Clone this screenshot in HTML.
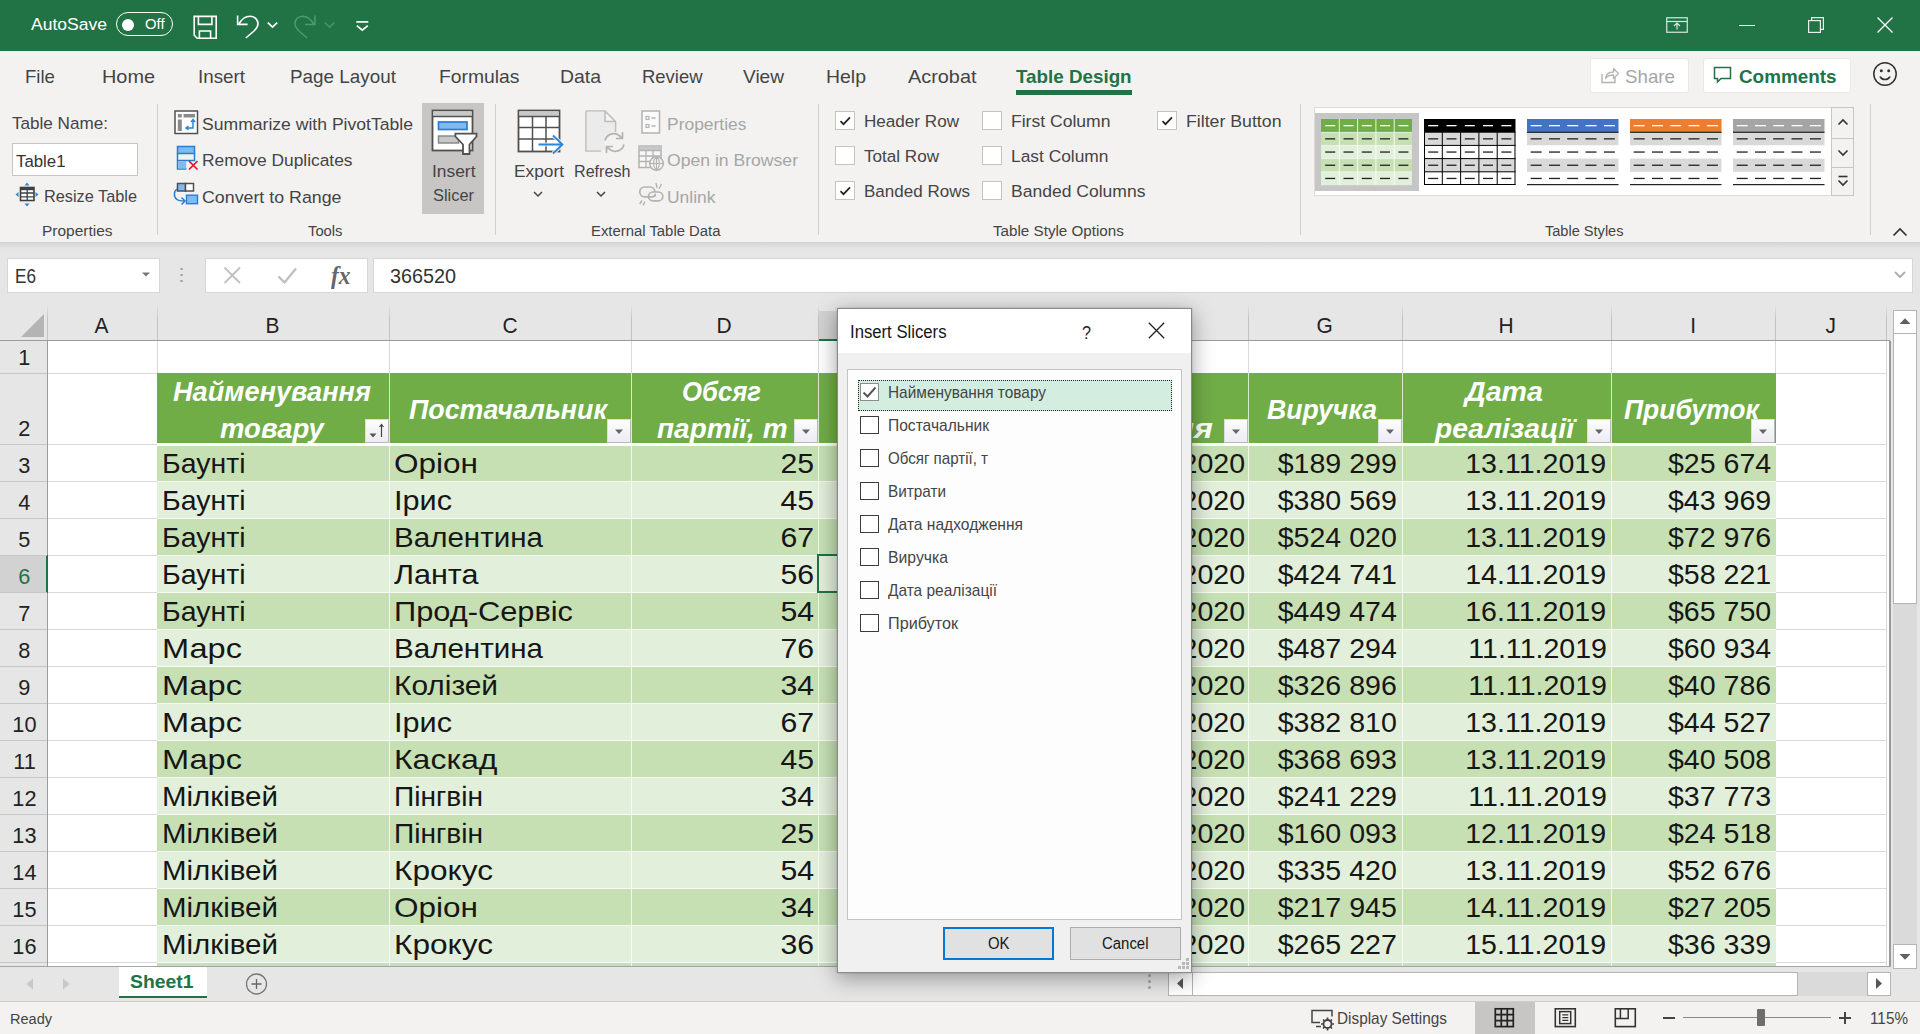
<!DOCTYPE html>
<html><head><meta charset="utf-8"><title>Excel</title>
<style>
html,body{margin:0;padding:0;overflow:hidden;}
body{width:1920px;height:1034px;overflow:hidden;position:relative;background:#e6e6e6;
font-family:"Liberation Sans",sans-serif;}
div,svg,span{position:absolute;box-sizing:border-box;}
span{white-space:pre;line-height:1;display:block;}
</style></head>
<body>
<div style="left:0px;top:0px;width:1920px;height:50.8px;background:#217346;"></div>
<div style="left:116px;top:12px;width:57px;height:24px;border:1.3px solid #fff;border-radius:12px;"></div>
<div style="left:122px;top:18.5px;width:12px;height:12px;background:#fff;border-radius:6px;"></div>
<svg style="left:192px;top:13px;" width="26" height="27" viewBox="0 0 26 27"><path d="M2.200 3.400h22v21.800h-19l-3-3z M6.400 3.400v8h13.500v-8 M7.400 25.200v-7.200h11.200v7.200" fill="none" stroke="#fff" stroke-width="1.600" stroke-linejoin="miter"/></svg>
<svg style="left:236px;top:13px;" width="26" height="27" viewBox="0 0 26 27"><path d="M1.600 2.600v8.800h10 M2.800 11 C6 5.500 10 3.200 14 3.200 C19 3.200 22 7 22 10.750 C22 14 20 16 18 18 L9.800 25" fill="none" stroke="#fff" stroke-width="1.600" stroke-linejoin="miter"/></svg>
<svg style="left:266px;top:20px;" width="13" height="10" viewBox="0 0 13 10"><path d="M1.800 2.600l4.700 4.500 4.700-4.500" fill="none" stroke="#fff" stroke-width="1.700"/></svg>
<svg style="left:292px;top:13px;" width="26" height="27" viewBox="0 0 26 27"><path d="M23 2.600v8.800h-10 M21.800 11 C18.500 5.500 14.500 3.200 10.500 3.200 C5.500 3.200 3 7 3 10.750 C3 14 5 16 7 18 L15 25" fill="none" stroke="#4c9b6e" stroke-width="1.500" stroke-linejoin="miter"/></svg>
<svg style="left:323px;top:20px;" width="13" height="10" viewBox="0 0 13 10"><path d="M1.800 2.600l4.700 4.500 4.700-4.500" fill="none" stroke="#439364" stroke-width="1.500"/></svg>
<svg style="left:355px;top:19px;" width="15" height="13" viewBox="0 0 15 13"><path d="M1.300 2.900h12" stroke="#fff" stroke-width="1.700"/><path d="M1.800 6.600l5.500 4.600 5.500-4.600" fill="none" stroke="#fff" stroke-width="1.700"/></svg>
<svg style="left:1666px;top:17px;" width="22" height="16" viewBox="0 0 22 16"><rect x="0.75" y="0.75" width="20.5" height="14.5" fill="none" stroke="#d7e8de" stroke-width="1.2"/><path d="M0.75 4.5h20.5" stroke="#d7e8de" stroke-width="1.2"/><path d="M11 12.5v-6 M8 9l3-3 3 3" fill="none" stroke="#d7e8de" stroke-width="1.2"/></svg>
<div style="left:1739px;top:24.5px;width:16px;height:1.3px;background:#e6f0ea;"></div>
<svg style="left:1808px;top:17px;" width="16" height="16" viewBox="0 0 16 16"><rect x="0.6" y="3.6" width="11.8" height="11.8" fill="none" stroke="#e6f0ea" stroke-width="1.2"/><path d="M3.6 3.6v-3h11.8v11.8h-3" fill="none" stroke="#e6f0ea" stroke-width="1.2"/></svg>
<svg style="left:1877px;top:17px;" width="16" height="16" viewBox="0 0 16 16"><path d="M0.5 0.5l15 15M15.500 0.5l-15 15" stroke="#fff" stroke-width="1.3"/></svg>
<div style="left:0px;top:50.8px;width:1920px;height:191.2px;background:#f3f2f1;"></div>
<div style="left:0px;top:242px;width:1920px;height:7px;background:linear-gradient(#d2d2d2,#e6e6e6);"></div>
<div style="left:1016px;top:90px;width:116px;height:5px;background:#217346;"></div>
<div style="left:1590px;top:58px;width:99px;height:35px;background:#fff;border:1px solid #ebe9e7;border-radius:3px;"></div>
<svg style="left:1600px;top:66px;" width="20" height="18" viewBox="0 0 20 18"><path d="M2 8v8.500h13v-5" fill="none" stroke="#b5b3b1" stroke-width="1.4"/><path d="M5.500 12.500c0.500-4.500 4-6.500 8-6.500v-3.500l5 5-5 5v-3.500c-3.500 0-6 0.500-8 3.500z" fill="none" stroke="#b5b3b1" stroke-width="1.3" stroke-linejoin="round"/></svg>
<div style="left:1702.5px;top:58px;width:148px;height:35px;background:#fff;border:1px solid #ebe9e7;border-radius:3px;"></div>
<svg style="left:1713px;top:66px;" width="20" height="18" viewBox="0 0 20 18"><path d="M1.5 1.5h16v11h-9.500l-3.500 3.500v-3.500h-3z" fill="none" stroke="#217346" stroke-width="1.5" stroke-linejoin="miter"/></svg>
<svg style="left:1871px;top:60px;" width="28" height="28" viewBox="0 0 28 28"><circle cx="14" cy="14" r="11.200" fill="none" stroke="#333" stroke-width="1.500"/><circle cx="10.300" cy="10.800" r="1.500" fill="#333"/><circle cx="17.700" cy="10.800" r="1.500" fill="#333"/><path d="M9.300 17c2 3.300 7.400 3.300 9.400 0" fill="none" stroke="#333" stroke-width="1.500" stroke-linecap="round"/></svg>
<div style="left:157px;top:104px;width:1px;height:131px;background:#d2d0ce;"></div>
<div style="left:495px;top:104px;width:1px;height:131px;background:#d2d0ce;"></div>
<div style="left:818px;top:104px;width:1px;height:131px;background:#d2d0ce;"></div>
<div style="left:1300px;top:104px;width:1px;height:131px;background:#d2d0ce;"></div>
<div style="left:1870px;top:104px;width:1px;height:131px;background:#d2d0ce;"></div>
<div style="left:12px;top:143px;width:126px;height:33px;background:#fff;border:1px solid #c8c6c4;"></div>
<svg style="left:15px;top:182px;" width="25" height="25" viewBox="0 0 25 25"><path d="M12 0.500l2.500 3h-5z M12 24.500l2.500-3h-5z M0.500 12.500l3-2.500v5z M23.500 12.500l-3-2.500v5z" fill="#2b88d8"/><rect x="5.500" y="5.500" width="13.500" height="13" fill="#fff" stroke="#404040" stroke-width="1.600"/><path d="M5.500 7h13.500" stroke="#404040" stroke-width="2.400"/><path d="M5.500 11h13.500 M5.500 14.800h13.500 M12.200 8v10.500" stroke="#404040" stroke-width="1.300"/></svg>
<svg style="left:174px;top:110px;" width="25" height="25" viewBox="0 0 25 25"><rect x="1" y="1" width="22.500" height="22.500" fill="#fff" stroke="#505050" stroke-width="1.500"/><rect x="3.800" y="4" width="4" height="3.500" fill="#8a8a8a"/><rect x="9.500" y="4" width="11.500" height="3.500" fill="#8a8a8a"/><rect x="3.800" y="9.500" width="4" height="11.500" fill="#8a8a8a"/><path d="M19 10v8h-6.500 M17 12l2-2.500 2 2.500 M14.500 16l-2.500 2 2.500 2" fill="none" stroke="#2b88d8" stroke-width="1.500"/></svg>
<svg style="left:176px;top:145px;" width="24" height="26" viewBox="0 0 24 26"><rect x="1.500" y="1.500" width="17" height="7" fill="#7fbaf0" stroke="#2b7cd3" stroke-width="1.500"/><path d="M1.500 8.500v15.500h9 M1.500 15.500h17v-7" fill="none" stroke="#2b7cd3" stroke-width="1.500"/><rect x="2.200" y="16.200" width="8" height="7.300" fill="#7fbaf0"/><path d="M13 16l8.500 8.500 M21.500 16l-8.500 8.500" stroke="#e81123" stroke-width="1.700"/></svg>
<svg style="left:173px;top:181px;" width="26" height="26" viewBox="0 0 26 26"><rect x="4.500" y="2.500" width="8" height="7.500" fill="#7fbaf0" stroke="#505050" stroke-width="1.500"/><rect x="12.500" y="2.500" width="8" height="7.500" fill="#fff" stroke="#505050" stroke-width="1.500"/><rect x="13.500" y="14.200" width="11" height="8.500" fill="#7fbaf0" stroke="#2b7cd3" stroke-width="1.400"/><path d="M4 8c-3.500 2.500-3.500 8 0 10.500 2 1.400 4.500 1.500 7.500 1.500 M8.500 16.500l3.500 3.500-3.500 3.500" fill="none" stroke="#2b7cd3" stroke-width="1.500"/></svg>
<div style="left:422px;top:103px;width:62px;height:111px;background:#c8c6c4;"></div>
<svg style="left:431px;top:109px;" width="47" height="47" viewBox="0 0 47 47"><rect x="1.500" y="1.500" width="40" height="40" fill="#fff" stroke="#505050" stroke-width="1.800"/><rect x="2.400" y="2.400" width="38.200" height="4.500" fill="#c8c8c8"/><path d="M1.500 7.500h40" stroke="#505050" stroke-width="1.500"/><rect x="7.500" y="13" width="28.500" height="7.500" fill="#7fbaf0" stroke="#2b7cd3" stroke-width="1.700"/><rect x="7.500" y="27" width="20" height="7" fill="#c8c8c8" stroke="#8a8a8a" stroke-width="1.500"/><path d="M24.400 24.600H45.500V27.500L38.500 35.500V45H32V35.500L24.400 27.500Z" fill="#fff" stroke="#505050" stroke-width="1.800" stroke-linejoin="miter"/></svg>
<svg style="left:517px;top:109px;" width="48" height="47" viewBox="0 0 48 47"><rect x="1.500" y="1.500" width="41" height="41" fill="#fff" stroke="#505050" stroke-width="1.800"/><rect x="2.400" y="2.400" width="39.200" height="4.500" fill="#c8c8c8"/><path d="M1.500 7.500h41 M1.500 18.500h41 M1.500 30h41 M15.500 7.500v35 M29 7.500v35" stroke="#505050" stroke-width="1.500"/><path d="M21.500 35.500h24 M36 26.500l9.500 9-9.500 9" fill="none" stroke="#f8f8f8" stroke-width="4" opacity="0.8"/><path d="M21.500 35.500h24 M36 26.500l9.500 9-9.500 9" fill="none" stroke="#2b88d8" stroke-width="1.800"/></svg>
<svg style="left:532px;top:189.5px;" width="12" height="9" viewBox="0 0 12 9"><path d="M2 2l4 4 4-4" fill="none" stroke="#444" stroke-width="1.500"/></svg>
<svg style="left:584px;top:109px;" width="46" height="47" viewBox="0 0 46 47"><path d="M2 2h19l10.500 10.500v12 M2 2v40h15" fill="none" stroke="#bdbdbd" stroke-width="1.600"/><path d="M2.800 2.800h17.800v10.200h10v28.200h-27.800z" fill="#ebebeb" stroke="none"/><path d="M21 2v10.500h10.500" fill="none" stroke="#bdbdbd" stroke-width="1.600"/><circle cx="30.500" cy="33.500" r="10.500" fill="#f3f2f1" stroke="none"/><path d="M21 31.500c1.500-6 8-8.500 13.500-5.500l3.500 3 M38.500 23v6.500h-6.500 M40 35.500c-1.500 6-8 8.500-13.500 5.500l-3.500-3 M22.500 44v-6.500h6.500" fill="none" stroke="#b3b3b3" stroke-width="1.700"/></svg>
<svg style="left:595px;top:190px;" width="12" height="9" viewBox="0 0 12 9"><path d="M2 2l4 4 4-4" fill="none" stroke="#444" stroke-width="1.500"/></svg>
<svg style="left:641px;top:110px;" width="20" height="25" viewBox="0 0 20 25"><rect x="1" y="1" width="17.500" height="22" fill="#fafafa" stroke="#b3b3b3" stroke-width="1.500"/><rect x="5" y="6.500" width="3" height="3" fill="none" stroke="#b3b3b3" stroke-width="1.200"/><rect x="5" y="14.500" width="3" height="3" fill="none" stroke="#b3b3b3" stroke-width="1.200"/><path d="M10.500 8h4 M10.500 16h4" stroke="#b3b3b3" stroke-width="1.400"/></svg>
<svg style="left:638px;top:145px;" width="27" height="27" viewBox="0 0 27 27"><rect x="1" y="1" width="22" height="21.500" fill="#f7f7f7" stroke="#b3b3b3" stroke-width="1.500"/><rect x="1.700" y="1.700" width="20.600" height="3.300" fill="#c8c8c8"/><path d="M1 5.500h22 M1 11h22 M1 16.500h12 M8 5.500v17 M15 5.500v8" stroke="#b3b3b3" stroke-width="1.300"/><circle cx="18.500" cy="18.500" r="6.800" fill="#f3f2f1" stroke="#b3b3b3" stroke-width="1.500"/><path d="M11.700 18.500h13.600 M18.500 11.700v13.600 M18.500 11.700c-4 4-4 9.500 0 13.600 M18.500 11.700c4 4 4 9.500 0 13.600" fill="none" stroke="#b3b3b3" stroke-width="1.100"/></svg>
<svg style="left:638px;top:181px;" width="27" height="27" viewBox="0 0 27 27"><rect x="1.800" y="6" width="15" height="9.800" rx="4.900" fill="none" stroke="#b3b3b3" stroke-width="1.700"/><rect x="10.500" y="11" width="14.300" height="8.800" rx="4.400" fill="#f3f2f1" stroke="#b3b3b3" stroke-width="1.700"/><path d="M10.500 15.800h4c2 0 2.800-1.500 2.800-3" fill="none" stroke="#b3b3b3" stroke-width="1.700"/><path d="M18 2l1 5 M23.500 3l-2.500 5 M7 20.500l-2 4 M4 19.500l-2.300 3.500" stroke="#b3b3b3" stroke-width="1.400"/></svg>
<div style="left:835px;top:110.5px;width:19.5px;height:19.5px;background:#fff;border:1.800px solid #c6c4c2;"></div>
<svg style="left:835px;top:110.5px;" width="20" height="20" viewBox="0 0 20 20"><path d="M5.500 10.200l3 3 6.500-6.800" fill="none" stroke="#222" stroke-width="1.700"/></svg>
<div style="left:835px;top:145.5px;width:19.5px;height:19.5px;background:#fff;border:1.800px solid #c6c4c2;"></div>
<div style="left:835px;top:180.5px;width:19.5px;height:19.5px;background:#fff;border:1.800px solid #c6c4c2;"></div>
<svg style="left:835px;top:180.5px;" width="20" height="20" viewBox="0 0 20 20"><path d="M5.500 10.200l3 3 6.500-6.800" fill="none" stroke="#222" stroke-width="1.700"/></svg>
<div style="left:982px;top:110.5px;width:19.5px;height:19.5px;background:#fff;border:1.800px solid #c6c4c2;"></div>
<div style="left:982px;top:145.5px;width:19.5px;height:19.5px;background:#fff;border:1.800px solid #c6c4c2;"></div>
<div style="left:982px;top:180.5px;width:19.5px;height:19.5px;background:#fff;border:1.800px solid #c6c4c2;"></div>
<div style="left:1157px;top:110.5px;width:19.5px;height:19.5px;background:#fff;border:1.800px solid #c6c4c2;"></div>
<svg style="left:1157px;top:110.5px;" width="20" height="20" viewBox="0 0 20 20"><path d="M5.500 10.200l3 3 6.500-6.800" fill="none" stroke="#222" stroke-width="1.700"/></svg>
<div style="left:1314px;top:107px;width:540px;height:89px;background:#fff;border:1px solid #dddbd9;"></div>
<div style="left:1831px;top:107px;width:23px;height:89px;background:#f3f2f1;border:1px solid #c8c6c4;"></div>
<div style="left:1831px;top:137.5px;width:23px;height:1px;background:#c8c6c4;"></div>
<div style="left:1831px;top:166.5px;width:23px;height:1px;background:#c8c6c4;"></div>
<svg style="left:1836px;top:117px;" width="14" height="10" viewBox="0 0 14 10"><path d="M2.500 7.500l4.500-4.500 4.500 4.500" fill="none" stroke="#333" stroke-width="1.600"/></svg>
<svg style="left:1836px;top:148px;" width="14" height="10" viewBox="0 0 14 10"><path d="M2.500 2.500l4.500 4.500 4.500-4.500" fill="none" stroke="#333" stroke-width="1.600"/></svg>
<svg style="left:1836px;top:174px;" width="14" height="14" viewBox="0 0 14 14"><path d="M2.500 2.500h9" stroke="#333" stroke-width="1.600"/><path d="M2.500 6.500l4.500 4.500 4.500-4.500" fill="none" stroke="#333" stroke-width="1.600"/></svg>
<div style="left:1314.5px;top:113px;width:104px;height:78px;background:#c6c6c6;"></div>
<svg style="left:1320.5px;top:119px;" width="91.5" height="66.5" viewBox="0 0 91.5 66.5"><rect x="0" y="0.0" width="91.5" height="13.4" fill="#70ad47"/><rect x="0" y="13.2" width="91.5" height="13.4" fill="#c6e0b4"/><rect x="0" y="26.4" width="91.5" height="13.4" fill="#e2efda"/><rect x="0" y="39.6" width="91.5" height="13.4" fill="#c6e0b4"/><rect x="0" y="52.8" width="91.5" height="13.4" fill="#e2efda"/><rect x="17.8" y="0" width="1" height="66.0" fill="#fff" opacity="0.85"/><rect x="36.1" y="0" width="1" height="66.0" fill="#fff" opacity="0.85"/><rect x="54.4" y="0" width="1" height="66.0" fill="#fff" opacity="0.85"/><rect x="72.7" y="0" width="1" height="66.0" fill="#fff" opacity="0.85"/><rect x="0" y="12.9" width="91.5" height="0.800" fill="#fff" opacity="0.7"/><rect x="0" y="26.1" width="91.5" height="0.800" fill="#fff" opacity="0.7"/><rect x="0" y="39.3" width="91.5" height="0.800" fill="#fff" opacity="0.7"/><rect x="0" y="52.5" width="91.5" height="0.800" fill="#fff" opacity="0.7"/><rect x="4.2" y="6.0" width="10" height="1.300" fill="#fff"/><rect x="22.5" y="6.0" width="10" height="1.300" fill="#fff"/><rect x="40.8" y="6.0" width="10" height="1.300" fill="#fff"/><rect x="59.0" y="6.0" width="10" height="1.300" fill="#fff"/><rect x="77.4" y="6.0" width="10" height="1.300" fill="#fff"/><rect x="4.2" y="19.2" width="10" height="1.300" fill="#222"/><rect x="22.5" y="19.2" width="10" height="1.300" fill="#222"/><rect x="40.8" y="19.2" width="10" height="1.300" fill="#222"/><rect x="59.0" y="19.2" width="10" height="1.300" fill="#222"/><rect x="77.4" y="19.2" width="10" height="1.300" fill="#222"/><rect x="4.2" y="32.4" width="10" height="1.300" fill="#222"/><rect x="22.5" y="32.4" width="10" height="1.300" fill="#222"/><rect x="40.8" y="32.4" width="10" height="1.300" fill="#222"/><rect x="59.0" y="32.4" width="10" height="1.300" fill="#222"/><rect x="77.4" y="32.4" width="10" height="1.300" fill="#222"/><rect x="4.2" y="45.6" width="10" height="1.300" fill="#222"/><rect x="22.5" y="45.6" width="10" height="1.300" fill="#222"/><rect x="40.8" y="45.6" width="10" height="1.300" fill="#222"/><rect x="59.0" y="45.6" width="10" height="1.300" fill="#222"/><rect x="77.4" y="45.6" width="10" height="1.300" fill="#222"/><rect x="4.2" y="58.8" width="10" height="1.300" fill="#222"/><rect x="22.5" y="58.8" width="10" height="1.300" fill="#222"/><rect x="40.8" y="58.8" width="10" height="1.300" fill="#222"/><rect x="59.0" y="58.8" width="10" height="1.300" fill="#222"/><rect x="77.4" y="58.8" width="10" height="1.300" fill="#222"/></svg>
<svg style="left:1424px;top:119px;" width="91.5" height="66.5" viewBox="0 0 91.5 66.5"><rect x="0" y="0.0" width="91.5" height="13.4" fill="#000"/><rect x="0" y="13.2" width="91.5" height="13.4" fill="#d9d9d9"/><rect x="0" y="26.4" width="91.5" height="13.4" fill="#fff"/><rect x="0" y="39.6" width="91.5" height="13.4" fill="#d9d9d9"/><rect x="0" y="52.8" width="91.5" height="13.4" fill="#fff"/><rect x="0.0" y="13.2" width="1" height="52.8" fill="#000"/><rect x="17.8" y="13.2" width="1" height="52.8" fill="#000"/><rect x="36.1" y="13.2" width="1" height="52.8" fill="#000"/><rect x="54.4" y="13.2" width="1" height="52.8" fill="#000"/><rect x="72.7" y="13.2" width="1" height="52.8" fill="#000"/><rect x="90.5" y="13.2" width="1" height="52.8" fill="#000"/><rect x="0" y="12.7" width="91.5" height="1" fill="#000"/><rect x="0" y="25.9" width="91.5" height="1" fill="#000"/><rect x="0" y="39.1" width="91.5" height="1" fill="#000"/><rect x="0" y="52.3" width="91.5" height="1" fill="#000"/><rect x="0" y="65.0" width="91.5" height="1" fill="#000"/><rect x="4.2" y="6.0" width="10" height="1.300" fill="#fff"/><rect x="22.5" y="6.0" width="10" height="1.300" fill="#fff"/><rect x="40.8" y="6.0" width="10" height="1.300" fill="#fff"/><rect x="59.0" y="6.0" width="10" height="1.300" fill="#fff"/><rect x="77.4" y="6.0" width="10" height="1.300" fill="#fff"/><rect x="4.2" y="19.2" width="10" height="1.300" fill="#222"/><rect x="22.5" y="19.2" width="10" height="1.300" fill="#222"/><rect x="40.8" y="19.2" width="10" height="1.300" fill="#222"/><rect x="59.0" y="19.2" width="10" height="1.300" fill="#222"/><rect x="77.4" y="19.2" width="10" height="1.300" fill="#222"/><rect x="4.2" y="32.4" width="10" height="1.300" fill="#222"/><rect x="22.5" y="32.4" width="10" height="1.300" fill="#222"/><rect x="40.8" y="32.4" width="10" height="1.300" fill="#222"/><rect x="59.0" y="32.4" width="10" height="1.300" fill="#222"/><rect x="77.4" y="32.4" width="10" height="1.300" fill="#222"/><rect x="4.2" y="45.6" width="10" height="1.300" fill="#222"/><rect x="22.5" y="45.6" width="10" height="1.300" fill="#222"/><rect x="40.8" y="45.6" width="10" height="1.300" fill="#222"/><rect x="59.0" y="45.6" width="10" height="1.300" fill="#222"/><rect x="77.4" y="45.6" width="10" height="1.300" fill="#222"/><rect x="4.2" y="58.8" width="10" height="1.300" fill="#222"/><rect x="22.5" y="58.8" width="10" height="1.300" fill="#222"/><rect x="40.8" y="58.8" width="10" height="1.300" fill="#222"/><rect x="59.0" y="58.8" width="10" height="1.300" fill="#222"/><rect x="77.4" y="58.8" width="10" height="1.300" fill="#222"/></svg>
<svg style="left:1527px;top:119px;" width="91.5" height="66.5" viewBox="0 0 91.5 66.5"><rect x="0" y="0.0" width="91.5" height="13.4" fill="#4472c4"/><rect x="0" y="13.2" width="91.5" height="13.4" fill="#d9d9d9"/><rect x="0" y="26.4" width="91.5" height="13.4" fill="#fff"/><rect x="0" y="39.6" width="91.5" height="13.4" fill="#d9d9d9"/><rect x="0" y="52.8" width="91.5" height="13.4" fill="#fff"/><rect x="0" y="12.7" width="91.5" height="1.200" fill="#222"/><rect x="0" y="65.0" width="91.5" height="1.200" fill="#222"/><rect x="3.7" y="6.0" width="11" height="1.300" fill="#fff"/><rect x="22.0" y="6.0" width="11" height="1.300" fill="#fff"/><rect x="40.2" y="6.0" width="11" height="1.300" fill="#fff"/><rect x="58.5" y="6.0" width="11" height="1.300" fill="#fff"/><rect x="76.9" y="6.0" width="11" height="1.300" fill="#fff"/><rect x="3.7" y="19.2" width="11" height="1.300" fill="#222"/><rect x="22.0" y="19.2" width="11" height="1.300" fill="#222"/><rect x="40.2" y="19.2" width="11" height="1.300" fill="#222"/><rect x="58.5" y="19.2" width="11" height="1.300" fill="#222"/><rect x="76.9" y="19.2" width="11" height="1.300" fill="#222"/><rect x="3.7" y="32.4" width="11" height="1.300" fill="#222"/><rect x="22.0" y="32.4" width="11" height="1.300" fill="#222"/><rect x="40.2" y="32.4" width="11" height="1.300" fill="#222"/><rect x="58.5" y="32.4" width="11" height="1.300" fill="#222"/><rect x="76.9" y="32.4" width="11" height="1.300" fill="#222"/><rect x="3.7" y="45.6" width="11" height="1.300" fill="#222"/><rect x="22.0" y="45.6" width="11" height="1.300" fill="#222"/><rect x="40.2" y="45.6" width="11" height="1.300" fill="#222"/><rect x="58.5" y="45.6" width="11" height="1.300" fill="#222"/><rect x="76.9" y="45.6" width="11" height="1.300" fill="#222"/><rect x="3.7" y="58.8" width="11" height="1.300" fill="#222"/><rect x="22.0" y="58.8" width="11" height="1.300" fill="#222"/><rect x="40.2" y="58.8" width="11" height="1.300" fill="#222"/><rect x="58.5" y="58.8" width="11" height="1.300" fill="#222"/><rect x="76.9" y="58.8" width="11" height="1.300" fill="#222"/></svg>
<svg style="left:1630px;top:119px;" width="91.5" height="66.5" viewBox="0 0 91.5 66.5"><rect x="0" y="0.0" width="91.5" height="13.4" fill="#ed7d31"/><rect x="0" y="13.2" width="91.5" height="13.4" fill="#d9d9d9"/><rect x="0" y="26.4" width="91.5" height="13.4" fill="#fff"/><rect x="0" y="39.6" width="91.5" height="13.4" fill="#d9d9d9"/><rect x="0" y="52.8" width="91.5" height="13.4" fill="#fff"/><rect x="0" y="12.7" width="91.5" height="1.200" fill="#222"/><rect x="0" y="65.0" width="91.5" height="1.200" fill="#222"/><rect x="3.7" y="6.0" width="11" height="1.300" fill="#fff"/><rect x="22.0" y="6.0" width="11" height="1.300" fill="#fff"/><rect x="40.2" y="6.0" width="11" height="1.300" fill="#fff"/><rect x="58.5" y="6.0" width="11" height="1.300" fill="#fff"/><rect x="76.9" y="6.0" width="11" height="1.300" fill="#fff"/><rect x="3.7" y="19.2" width="11" height="1.300" fill="#222"/><rect x="22.0" y="19.2" width="11" height="1.300" fill="#222"/><rect x="40.2" y="19.2" width="11" height="1.300" fill="#222"/><rect x="58.5" y="19.2" width="11" height="1.300" fill="#222"/><rect x="76.9" y="19.2" width="11" height="1.300" fill="#222"/><rect x="3.7" y="32.4" width="11" height="1.300" fill="#222"/><rect x="22.0" y="32.4" width="11" height="1.300" fill="#222"/><rect x="40.2" y="32.4" width="11" height="1.300" fill="#222"/><rect x="58.5" y="32.4" width="11" height="1.300" fill="#222"/><rect x="76.9" y="32.4" width="11" height="1.300" fill="#222"/><rect x="3.7" y="45.6" width="11" height="1.300" fill="#222"/><rect x="22.0" y="45.6" width="11" height="1.300" fill="#222"/><rect x="40.2" y="45.6" width="11" height="1.300" fill="#222"/><rect x="58.5" y="45.6" width="11" height="1.300" fill="#222"/><rect x="76.9" y="45.6" width="11" height="1.300" fill="#222"/><rect x="3.7" y="58.8" width="11" height="1.300" fill="#222"/><rect x="22.0" y="58.8" width="11" height="1.300" fill="#222"/><rect x="40.2" y="58.8" width="11" height="1.300" fill="#222"/><rect x="58.5" y="58.8" width="11" height="1.300" fill="#222"/><rect x="76.9" y="58.8" width="11" height="1.300" fill="#222"/></svg>
<svg style="left:1733px;top:119px;" width="91.5" height="66.5" viewBox="0 0 91.5 66.5"><rect x="0" y="0.0" width="91.5" height="13.4" fill="#a5a5a5"/><rect x="0" y="13.2" width="91.5" height="13.4" fill="#d9d9d9"/><rect x="0" y="26.4" width="91.5" height="13.4" fill="#fff"/><rect x="0" y="39.6" width="91.5" height="13.4" fill="#d9d9d9"/><rect x="0" y="52.8" width="91.5" height="13.4" fill="#fff"/><rect x="0" y="12.7" width="91.5" height="1.200" fill="#222"/><rect x="0" y="65.0" width="91.5" height="1.200" fill="#222"/><rect x="3.7" y="6.0" width="11" height="1.300" fill="#fff"/><rect x="22.0" y="6.0" width="11" height="1.300" fill="#fff"/><rect x="40.2" y="6.0" width="11" height="1.300" fill="#fff"/><rect x="58.5" y="6.0" width="11" height="1.300" fill="#fff"/><rect x="76.9" y="6.0" width="11" height="1.300" fill="#fff"/><rect x="3.7" y="19.2" width="11" height="1.300" fill="#222"/><rect x="22.0" y="19.2" width="11" height="1.300" fill="#222"/><rect x="40.2" y="19.2" width="11" height="1.300" fill="#222"/><rect x="58.5" y="19.2" width="11" height="1.300" fill="#222"/><rect x="76.9" y="19.2" width="11" height="1.300" fill="#222"/><rect x="3.7" y="32.4" width="11" height="1.300" fill="#222"/><rect x="22.0" y="32.4" width="11" height="1.300" fill="#222"/><rect x="40.2" y="32.4" width="11" height="1.300" fill="#222"/><rect x="58.5" y="32.4" width="11" height="1.300" fill="#222"/><rect x="76.9" y="32.4" width="11" height="1.300" fill="#222"/><rect x="3.7" y="45.6" width="11" height="1.300" fill="#222"/><rect x="22.0" y="45.6" width="11" height="1.300" fill="#222"/><rect x="40.2" y="45.6" width="11" height="1.300" fill="#222"/><rect x="58.5" y="45.6" width="11" height="1.300" fill="#222"/><rect x="76.9" y="45.6" width="11" height="1.300" fill="#222"/><rect x="3.7" y="58.8" width="11" height="1.300" fill="#222"/><rect x="22.0" y="58.8" width="11" height="1.300" fill="#222"/><rect x="40.2" y="58.8" width="11" height="1.300" fill="#222"/><rect x="58.5" y="58.8" width="11" height="1.300" fill="#222"/><rect x="76.9" y="58.8" width="11" height="1.300" fill="#222"/></svg>
<svg style="left:1891px;top:226px;" width="18" height="12" viewBox="0 0 18 12"><path d="M2.500 9.500l6.500-6.500 6.500 6.500" fill="none" stroke="#333" stroke-width="1.700"/></svg>
<div style="left:7px;top:258px;width:153px;height:35px;background:#fff;border:1px solid #d6d6d6;"></div>
<svg style="left:141px;top:271px;" width="10" height="7" viewBox="0 0 10 7"><path d="M1 1.500h8l-4 4z" fill="#777"/></svg>
<div style="left:180px;top:267.5px;width:2.5px;height:2.5px;background:#a6a6a6;border-radius:2px;"></div>
<div style="left:180px;top:273.5px;width:2.5px;height:2.5px;background:#a6a6a6;border-radius:2px;"></div>
<div style="left:180px;top:279.5px;width:2.5px;height:2.5px;background:#a6a6a6;border-radius:2px;"></div>
<div style="left:205px;top:258px;width:163px;height:35px;background:#fff;border:1px solid #d6d6d6;"></div>
<svg style="left:223px;top:266px;" width="19" height="19" viewBox="0 0 19 19"><path d="M1.500 1.500l15.500 15.500M17 1.500l-15.500 15.500" stroke="#c0c0c0" stroke-width="1.800"/></svg>
<svg style="left:277px;top:266px;" width="21" height="19" viewBox="0 0 21 19"><path d="M1.500 10.500l6 6 11.500-14" fill="none" stroke="#c0c0c0" stroke-width="2.400"/></svg>
<div style="left:373px;top:258px;width:1540px;height:35px;background:#fff;border:1px solid #d6d6d6;"></div>
<svg style="left:1893px;top:270px;" width="14" height="10" viewBox="0 0 14 10"><path d="M2 2l5 5 5-5" fill="none" stroke="#b0b0b0" stroke-width="2"/></svg>
<div style="left:47px;top:341px;width:1842px;height:625px;background:#fff;"></div>
<div style="left:0px;top:311px;width:1889px;height:30px;background:#e6e6e6;"></div>
<div style="left:0px;top:340px;width:1890px;height:1.3px;background:#9c9c9c;"></div>
<svg style="left:20px;top:313px;" width="25" height="25" viewBox="0 0 25 25"><path d="M24 1v23h-23z" fill="#b4b4b4"/></svg>
<div style="left:47px;top:306px;width:1px;height:34px;background:linear-gradient(#e0e0e0,#c2c2c2 40%);"></div>
<div style="left:157px;top:306px;width:1px;height:34px;background:linear-gradient(#e0e0e0,#c2c2c2 40%);"></div>
<div style="left:389px;top:306px;width:1px;height:34px;background:linear-gradient(#e0e0e0,#c2c2c2 40%);"></div>
<div style="left:631px;top:306px;width:1px;height:34px;background:linear-gradient(#e0e0e0,#c2c2c2 40%);"></div>
<div style="left:818px;top:306px;width:1px;height:34px;background:linear-gradient(#e0e0e0,#c2c2c2 40%);"></div>
<div style="left:1010px;top:306px;width:1px;height:34px;background:linear-gradient(#e0e0e0,#c2c2c2 40%);"></div>
<div style="left:1248px;top:306px;width:1px;height:34px;background:linear-gradient(#e0e0e0,#c2c2c2 40%);"></div>
<div style="left:1402px;top:306px;width:1px;height:34px;background:linear-gradient(#e0e0e0,#c2c2c2 40%);"></div>
<div style="left:1611px;top:306px;width:1px;height:34px;background:linear-gradient(#e0e0e0,#c2c2c2 40%);"></div>
<div style="left:1775px;top:306px;width:1px;height:34px;background:linear-gradient(#e0e0e0,#c2c2c2 40%);"></div>
<div style="left:1886px;top:306px;width:1px;height:34px;background:linear-gradient(#e0e0e0,#c2c2c2 40%);"></div>
<div style="left:819px;top:311px;width:191px;height:29px;background:#d2d2d2;"></div>
<div style="left:819px;top:339px;width:191px;height:2px;background:#217346;"></div>
<div style="left:0px;top:341px;width:47px;height:625px;background:#e6e6e6;"></div>
<div style="left:47px;top:341px;width:1px;height:625px;background:#9c9c9c;"></div>
<div style="left:0px;top:556px;width:46px;height:36px;background:#d2d2d2;"></div>
<div style="left:45.5px;top:555px;width:2.5px;height:38px;background:#217346;"></div>
<div style="left:0px;top:373px;width:47px;height:1px;background:#c6c6c6;"></div>
<div style="left:0px;top:444px;width:47px;height:1px;background:#c6c6c6;"></div>
<div style="left:0px;top:481px;width:47px;height:1px;background:#c6c6c6;"></div>
<div style="left:0px;top:518px;width:47px;height:1px;background:#c6c6c6;"></div>
<div style="left:0px;top:555px;width:47px;height:1px;background:#c6c6c6;"></div>
<div style="left:0px;top:592px;width:47px;height:1px;background:#c6c6c6;"></div>
<div style="left:0px;top:629px;width:47px;height:1px;background:#c6c6c6;"></div>
<div style="left:0px;top:666px;width:47px;height:1px;background:#c6c6c6;"></div>
<div style="left:0px;top:703px;width:47px;height:1px;background:#c6c6c6;"></div>
<div style="left:0px;top:740px;width:47px;height:1px;background:#c6c6c6;"></div>
<div style="left:0px;top:777px;width:47px;height:1px;background:#c6c6c6;"></div>
<div style="left:0px;top:814px;width:47px;height:1px;background:#c6c6c6;"></div>
<div style="left:0px;top:851px;width:47px;height:1px;background:#c6c6c6;"></div>
<div style="left:0px;top:888px;width:47px;height:1px;background:#c6c6c6;"></div>
<div style="left:0px;top:925px;width:47px;height:1px;background:#c6c6c6;"></div>
<div style="left:0px;top:962px;width:47px;height:1px;background:#c6c6c6;"></div>
<div style="left:48px;top:373px;width:1839px;height:1px;background:#d9d9d9;"></div>
<div style="left:48px;top:444px;width:1839px;height:1px;background:#d9d9d9;"></div>
<div style="left:48px;top:481px;width:1839px;height:1px;background:#d9d9d9;"></div>
<div style="left:48px;top:518px;width:1839px;height:1px;background:#d9d9d9;"></div>
<div style="left:48px;top:555px;width:1839px;height:1px;background:#d9d9d9;"></div>
<div style="left:48px;top:592px;width:1839px;height:1px;background:#d9d9d9;"></div>
<div style="left:48px;top:629px;width:1839px;height:1px;background:#d9d9d9;"></div>
<div style="left:48px;top:666px;width:1839px;height:1px;background:#d9d9d9;"></div>
<div style="left:48px;top:703px;width:1839px;height:1px;background:#d9d9d9;"></div>
<div style="left:48px;top:740px;width:1839px;height:1px;background:#d9d9d9;"></div>
<div style="left:48px;top:777px;width:1839px;height:1px;background:#d9d9d9;"></div>
<div style="left:48px;top:814px;width:1839px;height:1px;background:#d9d9d9;"></div>
<div style="left:48px;top:851px;width:1839px;height:1px;background:#d9d9d9;"></div>
<div style="left:48px;top:888px;width:1839px;height:1px;background:#d9d9d9;"></div>
<div style="left:48px;top:925px;width:1839px;height:1px;background:#d9d9d9;"></div>
<div style="left:48px;top:962px;width:1839px;height:1px;background:#d9d9d9;"></div>
<div style="left:48px;top:962px;width:1839px;height:1px;background:#d9d9d9;"></div>
<div style="left:157px;top:341px;width:1px;height:625px;background:#d9d9d9;"></div>
<div style="left:389px;top:341px;width:1px;height:625px;background:#d9d9d9;"></div>
<div style="left:631px;top:341px;width:1px;height:625px;background:#d9d9d9;"></div>
<div style="left:818px;top:341px;width:1px;height:625px;background:#d9d9d9;"></div>
<div style="left:1010px;top:341px;width:1px;height:625px;background:#d9d9d9;"></div>
<div style="left:1248px;top:341px;width:1px;height:625px;background:#d9d9d9;"></div>
<div style="left:1402px;top:341px;width:1px;height:625px;background:#d9d9d9;"></div>
<div style="left:1611px;top:341px;width:1px;height:625px;background:#d9d9d9;"></div>
<div style="left:1775px;top:341px;width:1px;height:625px;background:#d9d9d9;"></div>
<div style="left:1886px;top:341px;width:1px;height:625px;background:#d9d9d9;"></div>
<div style="left:1889px;top:341px;width:1.5px;height:626px;background:#9a9a9a;"></div>
<div style="left:157px;top:373px;width:1619px;height:71px;background:#70ad47;"></div>
<div style="left:157px;top:445px;width:1619px;height:37px;background:#c6e0b4;"></div>
<div style="left:157px;top:482px;width:1619px;height:37px;background:#e2efda;"></div>
<div style="left:157px;top:519px;width:1619px;height:37px;background:#c6e0b4;"></div>
<div style="left:157px;top:556px;width:1619px;height:37px;background:#e2efda;"></div>
<div style="left:157px;top:593px;width:1619px;height:37px;background:#c6e0b4;"></div>
<div style="left:157px;top:630px;width:1619px;height:37px;background:#e2efda;"></div>
<div style="left:157px;top:667px;width:1619px;height:37px;background:#c6e0b4;"></div>
<div style="left:157px;top:704px;width:1619px;height:37px;background:#e2efda;"></div>
<div style="left:157px;top:741px;width:1619px;height:37px;background:#c6e0b4;"></div>
<div style="left:157px;top:778px;width:1619px;height:37px;background:#e2efda;"></div>
<div style="left:157px;top:815px;width:1619px;height:37px;background:#c6e0b4;"></div>
<div style="left:157px;top:852px;width:1619px;height:37px;background:#e2efda;"></div>
<div style="left:157px;top:889px;width:1619px;height:37px;background:#c6e0b4;"></div>
<div style="left:157px;top:926px;width:1619px;height:37px;background:#e2efda;"></div>
<div style="left:157px;top:963px;width:1619px;height:3px;background:#c6e0b4;"></div>
<div style="left:157px;top:443px;width:1619px;height:3px;background:#fff;"></div>
<div style="left:389px;top:373px;width:1px;height:593px;background:rgba(255,255,255,0.75);"></div>
<div style="left:631px;top:373px;width:1px;height:593px;background:rgba(255,255,255,0.75);"></div>
<div style="left:818px;top:373px;width:1px;height:593px;background:rgba(255,255,255,0.75);"></div>
<div style="left:1010px;top:373px;width:1px;height:593px;background:rgba(255,255,255,0.75);"></div>
<div style="left:1248px;top:373px;width:1px;height:593px;background:rgba(255,255,255,0.75);"></div>
<div style="left:1402px;top:373px;width:1px;height:593px;background:rgba(255,255,255,0.75);"></div>
<div style="left:1611px;top:373px;width:1px;height:593px;background:rgba(255,255,255,0.75);"></div>
<div style="left:157px;top:481px;width:1619px;height:1.3px;background:rgba(255,255,255,0.8);"></div>
<div style="left:157px;top:518px;width:1619px;height:1.3px;background:rgba(255,255,255,0.8);"></div>
<div style="left:157px;top:555px;width:1619px;height:1.3px;background:rgba(255,255,255,0.8);"></div>
<div style="left:157px;top:592px;width:1619px;height:1.3px;background:rgba(255,255,255,0.8);"></div>
<div style="left:157px;top:629px;width:1619px;height:1.3px;background:rgba(255,255,255,0.8);"></div>
<div style="left:157px;top:666px;width:1619px;height:1.3px;background:rgba(255,255,255,0.8);"></div>
<div style="left:157px;top:703px;width:1619px;height:1.3px;background:rgba(255,255,255,0.8);"></div>
<div style="left:157px;top:740px;width:1619px;height:1.3px;background:rgba(255,255,255,0.8);"></div>
<div style="left:157px;top:777px;width:1619px;height:1.3px;background:rgba(255,255,255,0.8);"></div>
<div style="left:157px;top:814px;width:1619px;height:1.3px;background:rgba(255,255,255,0.8);"></div>
<div style="left:157px;top:851px;width:1619px;height:1.3px;background:rgba(255,255,255,0.8);"></div>
<div style="left:157px;top:888px;width:1619px;height:1.3px;background:rgba(255,255,255,0.8);"></div>
<div style="left:157px;top:925px;width:1619px;height:1.3px;background:rgba(255,255,255,0.8);"></div>
<div style="left:157px;top:962px;width:1619px;height:1.3px;background:rgba(255,255,255,0.8);"></div>
<div style="left:364.5px;top:419px;width:24px;height:24px;background:linear-gradient(#fdfdfd,#ececf2);border:1px solid #b9b9b9;border-top-color:#dcdcdc;border-left-color:#dcdcdc;"></div>
<svg style="left:364.5px;top:419px;" width="24" height="24" viewBox="0 0 24 24"><path d="M4.500 14.500h7l-3.500 4z" fill="#555"/><path d="M16.500 18v-12.500 M14.500 8l2-2.600 2 2.600" fill="none" stroke="#444" stroke-width="1.200"/></svg>
<div style="left:606.5px;top:419px;width:24px;height:24px;background:linear-gradient(#fdfdfd,#ececf2);border:1px solid #b9b9b9;border-top-color:#dcdcdc;border-left-color:#dcdcdc;"></div>
<svg style="left:606.5px;top:419px;" width="24" height="24" viewBox="0 0 24 24"><path d="M8 10.500h8l-4 4.500z" fill="#666"/></svg>
<div style="left:793.5px;top:419px;width:24px;height:24px;background:linear-gradient(#fdfdfd,#ececf2);border:1px solid #b9b9b9;border-top-color:#dcdcdc;border-left-color:#dcdcdc;"></div>
<svg style="left:793.5px;top:419px;" width="24" height="24" viewBox="0 0 24 24"><path d="M8 10.500h8l-4 4.500z" fill="#666"/></svg>
<div style="left:1223.5px;top:419px;width:24px;height:24px;background:linear-gradient(#fdfdfd,#ececf2);border:1px solid #b9b9b9;border-top-color:#dcdcdc;border-left-color:#dcdcdc;"></div>
<svg style="left:1223.5px;top:419px;" width="24" height="24" viewBox="0 0 24 24"><path d="M8 10.500h8l-4 4.500z" fill="#666"/></svg>
<div style="left:1377.5px;top:419px;width:24px;height:24px;background:linear-gradient(#fdfdfd,#ececf2);border:1px solid #b9b9b9;border-top-color:#dcdcdc;border-left-color:#dcdcdc;"></div>
<svg style="left:1377.5px;top:419px;" width="24" height="24" viewBox="0 0 24 24"><path d="M8 10.500h8l-4 4.500z" fill="#666"/></svg>
<div style="left:1586.5px;top:419px;width:24px;height:24px;background:linear-gradient(#fdfdfd,#ececf2);border:1px solid #b9b9b9;border-top-color:#dcdcdc;border-left-color:#dcdcdc;"></div>
<svg style="left:1586.5px;top:419px;" width="24" height="24" viewBox="0 0 24 24"><path d="M8 10.500h8l-4 4.500z" fill="#666"/></svg>
<div style="left:1751px;top:419px;width:24px;height:24px;background:linear-gradient(#fdfdfd,#ececf2);border:1px solid #b9b9b9;border-top-color:#dcdcdc;border-left-color:#dcdcdc;"></div>
<svg style="left:1751px;top:419px;" width="24" height="24" viewBox="0 0 24 24"><path d="M8 10.500h8l-4 4.500z" fill="#666"/></svg>
<div style="left:817px;top:554px;width:195px;height:39px;border:2px solid #217346;"></div>
<div style="left:0px;top:966px;width:1920px;height:36px;background:#e6e6e6;"></div>
<div style="left:0px;top:966.3px;width:1890.5px;height:1.2px;background:#a4a4a4;"></div>
<svg style="left:24px;top:977px;" width="12" height="14" viewBox="0 0 12 14"><path d="M9 1.500v11l-6.500-5.500z" fill="#c8c8c8"/></svg>
<svg style="left:60px;top:977px;" width="12" height="14" viewBox="0 0 12 14"><path d="M3 1.500v11l6.500-5.500z" fill="#c8c8c8"/></svg>
<div style="left:118.5px;top:967px;width:88px;height:31px;background:#fff;border-bottom:2.500px solid #217346;"></div>
<svg style="left:245px;top:972px;" width="24" height="24" viewBox="0 0 24 24"><circle cx="11.500" cy="12" r="10" fill="none" stroke="#777" stroke-width="1.300"/><path d="M6.500 12h10 M11.500 7v10" stroke="#666" stroke-width="1.300"/></svg>
<div style="left:1148px;top:974px;width:2.5px;height:2.5px;background:#a6a6a6;border-radius:2px;"></div>
<div style="left:1148px;top:980px;width:2.5px;height:2.5px;background:#a6a6a6;border-radius:2px;"></div>
<div style="left:1148px;top:986px;width:2.5px;height:2.5px;background:#a6a6a6;border-radius:2px;"></div>
<div style="left:1168px;top:971.5px;width:722px;height:24px;background:#dadada;"></div>
<div style="left:1168px;top:971.5px;width:25px;height:24.5px;background:#fff;border:1px solid #b4b4b4;"></div>
<svg style="left:1168px;top:971px;" width="25" height="25" viewBox="0 0 25 25"><path d="M15 7v11l-6-5.500z" fill="#555"/></svg>
<div style="left:1192px;top:971.5px;width:606px;height:24.5px;background:#fff;border:1px solid #b4b4b4;"></div>
<div style="left:1866.5px;top:971.5px;width:24.5px;height:24.5px;background:#fff;border:1px solid #b4b4b4;"></div>
<svg style="left:1866px;top:971px;" width="24" height="25" viewBox="0 0 24 25"><path d="M10 7v11l6-5.500z" fill="#555"/></svg>
<div style="left:1890.5px;top:300px;width:29.5px;height:670px;background:#e6e6e6;"></div>
<div style="left:1893px;top:333px;width:24px;height:611px;background:#dadada;"></div>
<div style="left:1892.5px;top:309.5px;width:24.5px;height:24.5px;background:#fff;border:1px solid #b4b4b4;"></div>
<svg style="left:1893px;top:309px;" width="24" height="24" viewBox="0 0 24 24"><path d="M6.500 15l5.500-5.800 5.500 5.800z" fill="#606060"/></svg>
<div style="left:1892.5px;top:334px;width:24.5px;height:270px;background:#fff;border:1px solid #b4b4b4;border-top:none;"></div>
<div style="left:1892.5px;top:944px;width:24.5px;height:24.5px;background:#fff;border:1px solid #b4b4b4;"></div>
<svg style="left:1893px;top:944px;" width="24" height="25" viewBox="0 0 24 25"><path d="M6.500 10l5.500 5.800 5.500-5.800z" fill="#606060"/></svg>
<div style="left:0px;top:1001px;width:1920px;height:33px;background:#f3f2f1;border-top:1px solid #d0cecc;"></div>
<svg style="left:1310px;top:1008px;" width="26" height="24" viewBox="0 0 26 24"><path d="M10 14.500h-8v-12h20v6" fill="none" stroke="#444" stroke-width="1.500"/><path d="M6 18.500h5" stroke="#444" stroke-width="1.500"/><circle cx="17.500" cy="16" r="4" fill="none" stroke="#444" stroke-width="1.800"/><path d="M17.500 9.500v3 M17.500 19.500v3 M11 16h3 M21 16h3 M13 11.500l2 2 M20 18.500l2 2 M22 11.500l-2 2 M15 18.500l-2 2" stroke="#444" stroke-width="1.700"/></svg>
<div style="left:1475px;top:1002px;width:60px;height:32px;background:#c8c6c4;"></div>
<svg style="left:1494px;top:1007px;" width="21" height="21" viewBox="0 0 21 21"><rect x="1.300" y="1.800" width="18" height="17.800" fill="none" stroke="#222" stroke-width="1.700"/><path d="M1.300 7.700h18 M1.300 13.700h18 M7.300 1.800v17.800 M13.300 1.800v17.800" stroke="#222" stroke-width="1.700"/></svg>
<svg style="left:1554px;top:1007px;" width="23" height="21" viewBox="0 0 23 21"><rect x="1.300" y="1.800" width="20" height="17.800" fill="none" stroke="#333" stroke-width="1.600"/><rect x="5.700" y="4.600" width="11" height="12" fill="none" stroke="#333" stroke-width="1.500"/><path d="M8.300 7.800h6 M8.300 10.600h6 M8.300 13.400h6" stroke="#333" stroke-width="1.200"/></svg>
<svg style="left:1614px;top:1007px;" width="23" height="21" viewBox="0 0 23 21"><rect x="1.300" y="1.800" width="20" height="17.800" fill="none" stroke="#333" stroke-width="1.600"/><path d="M1.300 11.400h12.900v-9.600 M6.400 1.800v9.600" fill="none" stroke="#333" stroke-width="1.500"/></svg>
<div style="left:1663px;top:1017.3px;width:12px;height:1.4px;background:#444;"></div>
<div style="left:1683px;top:1017.3px;width:148px;height:1.2px;background:#8a8886;"></div>
<div style="left:1757px;top:1009px;width:8px;height:17px;background:#6e6e6e;border-radius:1px;"></div>
<div style="left:1839px;top:1017.3px;width:12px;height:1.4px;background:#444;"></div>
<div style="left:1844.3px;top:1012px;width:1.4px;height:12px;background:#444;"></div>
<span style="font-size:16.8px;color:#fff;left:31.30px;top:16.93px;transform:scaleX(1.0442);transform-origin:left top;">AutoSave</span>
<span style="font-size:14.5px;color:#fff;left:145.00px;top:17.18px;transform:scaleX(1.0221);transform-origin:left top;">Off</span>
<span style="font-size:18.6px;color:#444444;left:25.00px;top:67.71px;">File</span>
<span style="font-size:18.6px;color:#444444;left:102.00px;top:67.71px;transform:scaleX(1.0683);transform-origin:left top;">Home</span>
<span style="font-size:18.6px;color:#444444;left:198.00px;top:67.71px;transform:scaleX(1.0104);transform-origin:left top;">Insert</span>
<span style="font-size:18.6px;color:#444444;left:290.00px;top:67.71px;transform:scaleX(1.0151);transform-origin:left top;">Page Layout</span>
<span style="font-size:18.6px;color:#444444;left:439.00px;top:67.71px;transform:scaleX(1.0387);transform-origin:left top;">Formulas</span>
<span style="font-size:18.6px;color:#444444;left:560.00px;top:67.71px;transform:scaleX(1.0438);transform-origin:left top;">Data</span>
<span style="font-size:18.6px;color:#444444;left:641.50px;top:67.71px;transform:scaleX(0.9923);transform-origin:left top;">Review</span>
<span style="font-size:18.6px;color:#444444;left:743.00px;top:67.71px;transform:scaleX(1.0258);transform-origin:left top;">View</span>
<span style="font-size:18.6px;color:#444444;left:826.00px;top:67.71px;transform:scaleX(1.0458);transform-origin:left top;">Help</span>
<span style="font-size:18.6px;color:#444444;left:907.50px;top:67.71px;transform:scaleX(1.0687);transform-origin:left top;">Acrobat</span>
<span style="font-size:18.6px;color:#217346;font-weight:700;left:1016.00px;top:67.71px;transform:scaleX(1.0110);transform-origin:left top;">Table Design</span>
<span style="font-size:18.6px;color:#a8a6a4;left:1625.00px;top:67.71px;transform:scaleX(1.0076);transform-origin:left top;">Share</span>
<span style="font-size:18.6px;color:#217346;font-weight:700;left:1738.50px;top:67.71px;transform:scaleX(1.0146);transform-origin:left top;">Comments</span>
<span style="font-size:15.2px;color:#444444;left:42.00px;top:222.58px;transform:scaleX(1.0183);transform-origin:left top;">Properties</span>
<span style="font-size:15.2px;color:#444444;left:308.00px;top:222.58px;transform:scaleX(0.9727);transform-origin:left top;">Tools</span>
<span style="font-size:15.2px;color:#444444;left:591.00px;top:222.58px;transform:scaleX(0.9790);transform-origin:left top;">External Table Data</span>
<span style="font-size:15.2px;color:#444444;left:993.00px;top:222.58px;">Table Style Options</span>
<span style="font-size:15.2px;color:#444444;left:1545.00px;top:222.58px;transform:scaleX(0.9586);transform-origin:left top;">Table Styles</span>
<span style="font-size:17.2px;color:#444444;left:12.00px;top:114.89px;transform:scaleX(0.9948);transform-origin:left top;">Table Name:</span>
<span style="font-size:17.2px;color:#333;left:15.50px;top:152.89px;transform:scaleX(0.9772);transform-origin:left top;">Table1</span>
<span style="font-size:17.2px;color:#444444;left:44.00px;top:188.19px;transform:scaleX(0.9481);transform-origin:left top;">Resize Table</span>
<span style="font-size:17.2px;color:#444444;left:202.00px;top:115.69px;transform:scaleX(1.0226);transform-origin:left top;">Summarize with PivotTable</span>
<span style="font-size:17.2px;color:#444444;left:202.00px;top:152.19px;transform:scaleX(1.0099);transform-origin:left top;">Remove Duplicates</span>
<span style="font-size:17.2px;color:#444444;left:202.00px;top:188.69px;transform:scaleX(1.0355);transform-origin:left top;">Convert to Range</span>
<span style="font-size:17.2px;color:#444444;left:432.00px;top:163.09px;transform:scaleX(1.0116);transform-origin:left top;">Insert</span>
<span style="font-size:17.2px;color:#444444;left:432.50px;top:187.09px;transform:scaleX(0.9538);transform-origin:left top;">Slicer</span>
<span style="font-size:17.2px;color:#444444;left:514.00px;top:163.09px;transform:scaleX(1.0063);transform-origin:left top;">Export</span>
<span style="font-size:17.2px;color:#444444;left:574.00px;top:163.09px;transform:scaleX(0.9387);transform-origin:left top;">Refresh</span>
<span style="font-size:17.2px;color:#a6a6a6;left:667.00px;top:116.19px;transform:scaleX(1.0148);transform-origin:left top;">Properties</span>
<span style="font-size:17.2px;color:#a6a6a6;left:667.00px;top:152.19px;transform:scaleX(1.0233);transform-origin:left top;">Open in Browser</span>
<span style="font-size:17.2px;color:#a6a6a6;left:667.00px;top:188.69px;transform:scaleX(1.0154);transform-origin:left top;">Unlink</span>
<span style="font-size:17.2px;color:#444444;left:863.50px;top:112.59px;transform:scaleX(0.9944);transform-origin:left top;">Header Row</span>
<span style="font-size:17.2px;color:#444444;left:863.50px;top:147.59px;transform:scaleX(0.9938);transform-origin:left top;">Total Row</span>
<span style="font-size:17.2px;color:#444444;left:863.50px;top:182.59px;transform:scaleX(0.9905);transform-origin:left top;">Banded Rows</span>
<span style="font-size:17.2px;color:#444444;left:1010.50px;top:112.59px;transform:scaleX(1.0213);transform-origin:left top;">First Column</span>
<span style="font-size:17.2px;color:#444444;left:1010.50px;top:147.59px;transform:scaleX(1.0104);transform-origin:left top;">Last Column</span>
<span style="font-size:17.2px;color:#444444;left:1010.50px;top:182.59px;transform:scaleX(1.0200);transform-origin:left top;">Banded Columns</span>
<span style="font-size:17.2px;color:#444444;left:1185.50px;top:112.59px;transform:scaleX(1.0305);transform-origin:left top;">Filter Button</span>
<span style="font-size:19.5px;color:#333;left:15.00px;top:267.44px;transform:scaleX(0.8802);transform-origin:left top;">E6</span>
<span style="font-size:25px;color:#666;font-weight:700;font-style:italic;left:331.00px;top:262.79px;transform:scaleX(0.9362);transform-origin:left top;font-family:'Liberation Serif',serif;">fx</span>
<span style="font-size:19.5px;color:#333;left:390.00px;top:267.44px;transform:scaleX(1.0142);transform-origin:left top;">366520</span>
<span style="font-size:22.5px;color:#222;left:94.49px;top:314.80px;transform:scaleX(0.9300);transform-origin:center top;">A</span>
<span style="font-size:22.5px;color:#222;left:265.49px;top:314.80px;transform:scaleX(0.9300);transform-origin:center top;">B</span>
<span style="font-size:22.5px;color:#222;left:501.88px;top:314.80px;transform:scaleX(0.9300);transform-origin:center top;">C</span>
<span style="font-size:22.5px;color:#222;left:716.38px;top:314.80px;transform:scaleX(0.9300);transform-origin:center top;">D</span>
<span style="font-size:22.5px;color:#222;left:906.49px;top:314.80px;transform:scaleX(0.9300);transform-origin:center top;">E</span>
<span style="font-size:22.5px;color:#222;left:1122.12px;top:314.80px;transform:scaleX(0.9300);transform-origin:center top;">F</span>
<span style="font-size:22.5px;color:#222;left:1316.24px;top:314.80px;transform:scaleX(0.9300);transform-origin:center top;">G</span>
<span style="font-size:22.5px;color:#222;left:1498.38px;top:314.80px;transform:scaleX(0.9300);transform-origin:center top;">H</span>
<span style="font-size:22.5px;color:#222;left:1689.87px;top:314.80px;transform:scaleX(0.9300);transform-origin:center top;">I</span>
<span style="font-size:22.5px;color:#222;left:1824.88px;top:314.80px;transform:scaleX(0.9300);transform-origin:center top;">J</span>
<span style="font-size:22.4px;color:#222;left:18.07px;top:346.59px;transform:scaleX(0.9700);transform-origin:center top;">1</span>
<span style="font-size:22.4px;color:#222;left:18.07px;top:417.59px;transform:scaleX(0.9700);transform-origin:center top;">2</span>
<span style="font-size:22.4px;color:#222;left:18.07px;top:454.59px;transform:scaleX(0.9700);transform-origin:center top;">3</span>
<span style="font-size:22.4px;color:#222;left:18.07px;top:491.59px;transform:scaleX(0.9700);transform-origin:center top;">4</span>
<span style="font-size:22.4px;color:#222;left:18.07px;top:528.59px;transform:scaleX(0.9700);transform-origin:center top;">5</span>
<span style="font-size:22.4px;color:#217346;left:18.07px;top:565.59px;transform:scaleX(0.9700);transform-origin:center top;">6</span>
<span style="font-size:22.4px;color:#222;left:18.07px;top:602.59px;transform:scaleX(0.9700);transform-origin:center top;">7</span>
<span style="font-size:22.4px;color:#222;left:18.07px;top:639.59px;transform:scaleX(0.9700);transform-origin:center top;">8</span>
<span style="font-size:22.4px;color:#222;left:18.07px;top:676.59px;transform:scaleX(0.9700);transform-origin:center top;">9</span>
<span style="font-size:22.4px;color:#222;left:11.85px;top:713.59px;transform:scaleX(0.9700);transform-origin:center top;">10</span>
<span style="font-size:22.4px;color:#222;left:12.68px;top:750.59px;transform:scaleX(0.9700);transform-origin:center top;">11</span>
<span style="font-size:22.4px;color:#222;left:11.85px;top:787.59px;transform:scaleX(0.9700);transform-origin:center top;">12</span>
<span style="font-size:22.4px;color:#222;left:11.85px;top:824.59px;transform:scaleX(0.9700);transform-origin:center top;">13</span>
<span style="font-size:22.4px;color:#222;left:11.85px;top:861.59px;transform:scaleX(0.9700);transform-origin:center top;">14</span>
<span style="font-size:22.4px;color:#222;left:11.85px;top:898.59px;transform:scaleX(0.9700);transform-origin:center top;">15</span>
<span style="font-size:22.4px;color:#222;left:11.85px;top:935.59px;transform:scaleX(0.9700);transform-origin:center top;">16</span>
<span style="font-size:27.5px;color:#fff;font-weight:700;font-style:italic;left:172.50px;top:377.87px;transform:scaleX(0.9878);transform-origin:left top;">Найменування</span>
<span style="font-size:27.5px;color:#fff;font-weight:700;font-style:italic;left:220.00px;top:415.17px;">товару</span>
<span style="font-size:27.5px;color:#fff;font-weight:700;font-style:italic;left:408.70px;top:395.87px;transform:scaleX(0.9753);transform-origin:left top;">Постачальник</span>
<span style="font-size:27.5px;color:#fff;font-weight:700;font-style:italic;left:682.00px;top:377.87px;transform:scaleX(0.9339);transform-origin:left top;">Обсяг</span>
<span style="font-size:27.5px;color:#fff;font-weight:700;font-style:italic;left:656.70px;top:415.17px;transform:scaleX(1.0167);transform-origin:left top;">партії, т</span>
<span style="font-size:27.5px;color:#fff;font-weight:700;font-style:italic;left:1000.00px;top:415.17px;transform:scaleX(1.1685);transform-origin:left top;">надходження</span>
<span style="font-size:27.5px;color:#fff;font-weight:700;font-style:italic;left:1267.40px;top:395.87px;transform:scaleX(0.9680);transform-origin:left top;">Виручка</span>
<span style="font-size:27.5px;color:#fff;font-weight:700;font-style:italic;left:1465.00px;top:377.87px;transform:scaleX(1.0413);transform-origin:left top;">Дата</span>
<span style="font-size:27.5px;color:#fff;font-weight:700;font-style:italic;left:1435.00px;top:415.17px;transform:scaleX(1.0282);transform-origin:left top;">реалізації</span>
<span style="font-size:27.5px;color:#fff;font-weight:700;font-style:italic;left:1624.00px;top:395.87px;transform:scaleX(0.9654);transform-origin:left top;">Прибуток</span>
<span style="font-size:28px;color:#161616;left:162.20px;top:449.85px;transform:scaleX(1.0165);transform-origin:left top;">Баунті</span>
<span style="font-size:28px;color:#161616;left:394.20px;top:449.85px;transform:scaleX(1.1259);transform-origin:left top;">Оріон</span>
<span style="font-size:28px;color:#161616;left:783.34px;top:449.85px;transform:scaleX(1.0800);transform-origin:right top;">25</span>
<span style="font-size:28px;color:#161616;left:1106.94px;top:449.85px;transform:scaleX(1.0200);transform-origin:right top;">10.11.2020</span>
<span style="font-size:28px;color:#161616;left:1280.20px;top:449.85px;transform:scaleX(1.0200);transform-origin:right top;">$189 299</span>
<span style="font-size:28px;color:#161616;left:1468.44px;top:449.85px;transform:scaleX(1.0200);transform-origin:right top;">13.11.2019</span>
<span style="font-size:28px;color:#161616;left:1670.28px;top:449.85px;transform:scaleX(1.0200);transform-origin:right top;">$25 674</span>
<span style="font-size:28px;color:#161616;left:162.20px;top:486.85px;transform:scaleX(1.0165);transform-origin:left top;">Баунті</span>
<span style="font-size:28px;color:#161616;left:394.20px;top:486.85px;transform:scaleX(1.0943);transform-origin:left top;">Ірис</span>
<span style="font-size:28px;color:#161616;left:783.34px;top:486.85px;transform:scaleX(1.0800);transform-origin:right top;">45</span>
<span style="font-size:28px;color:#161616;left:1106.94px;top:486.85px;transform:scaleX(1.0200);transform-origin:right top;">10.11.2020</span>
<span style="font-size:28px;color:#161616;left:1280.20px;top:486.85px;transform:scaleX(1.0200);transform-origin:right top;">$380 569</span>
<span style="font-size:28px;color:#161616;left:1468.44px;top:486.85px;transform:scaleX(1.0200);transform-origin:right top;">13.11.2019</span>
<span style="font-size:28px;color:#161616;left:1670.28px;top:486.85px;transform:scaleX(1.0200);transform-origin:right top;">$43 969</span>
<span style="font-size:28px;color:#161616;left:162.20px;top:523.85px;transform:scaleX(1.0165);transform-origin:left top;">Баунті</span>
<span style="font-size:28px;color:#161616;left:394.20px;top:523.85px;transform:scaleX(1.0558);transform-origin:left top;">Валентина</span>
<span style="font-size:28px;color:#161616;left:783.34px;top:523.85px;transform:scaleX(1.0800);transform-origin:right top;">67</span>
<span style="font-size:28px;color:#161616;left:1106.94px;top:523.85px;transform:scaleX(1.0200);transform-origin:right top;">10.11.2020</span>
<span style="font-size:28px;color:#161616;left:1280.20px;top:523.85px;transform:scaleX(1.0200);transform-origin:right top;">$524 020</span>
<span style="font-size:28px;color:#161616;left:1468.44px;top:523.85px;transform:scaleX(1.0200);transform-origin:right top;">13.11.2019</span>
<span style="font-size:28px;color:#161616;left:1670.28px;top:523.85px;transform:scaleX(1.0200);transform-origin:right top;">$72 976</span>
<span style="font-size:28px;color:#161616;left:162.20px;top:560.85px;transform:scaleX(1.0165);transform-origin:left top;">Баунті</span>
<span style="font-size:28px;color:#161616;left:394.20px;top:560.85px;transform:scaleX(1.0903);transform-origin:left top;">Ланта</span>
<span style="font-size:28px;color:#161616;left:783.34px;top:560.85px;transform:scaleX(1.0800);transform-origin:right top;">56</span>
<span style="font-size:28px;color:#161616;left:1106.94px;top:560.85px;transform:scaleX(1.0200);transform-origin:right top;">10.11.2020</span>
<span style="font-size:28px;color:#161616;left:1280.20px;top:560.85px;transform:scaleX(1.0200);transform-origin:right top;">$424 741</span>
<span style="font-size:28px;color:#161616;left:1468.44px;top:560.85px;transform:scaleX(1.0200);transform-origin:right top;">14.11.2019</span>
<span style="font-size:28px;color:#161616;left:1670.28px;top:560.85px;transform:scaleX(1.0200);transform-origin:right top;">$58 221</span>
<span style="font-size:28px;color:#161616;left:162.20px;top:597.85px;transform:scaleX(1.0165);transform-origin:left top;">Баунті</span>
<span style="font-size:28px;color:#161616;left:394.20px;top:597.85px;transform:scaleX(1.0996);transform-origin:left top;">Прод-Сервіс</span>
<span style="font-size:28px;color:#161616;left:783.34px;top:597.85px;transform:scaleX(1.0800);transform-origin:right top;">54</span>
<span style="font-size:28px;color:#161616;left:1106.94px;top:597.85px;transform:scaleX(1.0200);transform-origin:right top;">10.11.2020</span>
<span style="font-size:28px;color:#161616;left:1280.20px;top:597.85px;transform:scaleX(1.0200);transform-origin:right top;">$449 474</span>
<span style="font-size:28px;color:#161616;left:1468.44px;top:597.85px;transform:scaleX(1.0200);transform-origin:right top;">16.11.2019</span>
<span style="font-size:28px;color:#161616;left:1670.28px;top:597.85px;transform:scaleX(1.0200);transform-origin:right top;">$65 750</span>
<span style="font-size:28px;color:#161616;left:162.20px;top:634.85px;transform:scaleX(1.1628);transform-origin:left top;">Марс</span>
<span style="font-size:28px;color:#161616;left:394.20px;top:634.85px;transform:scaleX(1.0558);transform-origin:left top;">Валентина</span>
<span style="font-size:28px;color:#161616;left:783.34px;top:634.85px;transform:scaleX(1.0800);transform-origin:right top;">76</span>
<span style="font-size:28px;color:#161616;left:1106.94px;top:634.85px;transform:scaleX(1.0200);transform-origin:right top;">10.11.2020</span>
<span style="font-size:28px;color:#161616;left:1280.20px;top:634.85px;transform:scaleX(1.0200);transform-origin:right top;">$487 294</span>
<span style="font-size:28px;color:#161616;left:1470.52px;top:634.85px;transform:scaleX(1.0200);transform-origin:right top;">11.11.2019</span>
<span style="font-size:28px;color:#161616;left:1670.28px;top:634.85px;transform:scaleX(1.0200);transform-origin:right top;">$60 934</span>
<span style="font-size:28px;color:#161616;left:162.20px;top:671.85px;transform:scaleX(1.1628);transform-origin:left top;">Марс</span>
<span style="font-size:28px;color:#161616;left:394.20px;top:671.85px;transform:scaleX(1.0660);transform-origin:left top;">Колізей</span>
<span style="font-size:28px;color:#161616;left:783.34px;top:671.85px;transform:scaleX(1.0800);transform-origin:right top;">34</span>
<span style="font-size:28px;color:#161616;left:1106.94px;top:671.85px;transform:scaleX(1.0200);transform-origin:right top;">10.11.2020</span>
<span style="font-size:28px;color:#161616;left:1280.20px;top:671.85px;transform:scaleX(1.0200);transform-origin:right top;">$326 896</span>
<span style="font-size:28px;color:#161616;left:1470.52px;top:671.85px;transform:scaleX(1.0200);transform-origin:right top;">11.11.2019</span>
<span style="font-size:28px;color:#161616;left:1670.28px;top:671.85px;transform:scaleX(1.0200);transform-origin:right top;">$40 786</span>
<span style="font-size:28px;color:#161616;left:162.20px;top:708.85px;transform:scaleX(1.1628);transform-origin:left top;">Марс</span>
<span style="font-size:28px;color:#161616;left:394.20px;top:708.85px;transform:scaleX(1.0943);transform-origin:left top;">Ірис</span>
<span style="font-size:28px;color:#161616;left:783.34px;top:708.85px;transform:scaleX(1.0800);transform-origin:right top;">67</span>
<span style="font-size:28px;color:#161616;left:1106.94px;top:708.85px;transform:scaleX(1.0200);transform-origin:right top;">10.11.2020</span>
<span style="font-size:28px;color:#161616;left:1280.20px;top:708.85px;transform:scaleX(1.0200);transform-origin:right top;">$382 810</span>
<span style="font-size:28px;color:#161616;left:1468.44px;top:708.85px;transform:scaleX(1.0200);transform-origin:right top;">13.11.2019</span>
<span style="font-size:28px;color:#161616;left:1670.28px;top:708.85px;transform:scaleX(1.0200);transform-origin:right top;">$44 527</span>
<span style="font-size:28px;color:#161616;left:162.20px;top:745.85px;transform:scaleX(1.1628);transform-origin:left top;">Марс</span>
<span style="font-size:28px;color:#161616;left:394.20px;top:745.85px;transform:scaleX(1.1415);transform-origin:left top;">Каскад</span>
<span style="font-size:28px;color:#161616;left:783.34px;top:745.85px;transform:scaleX(1.0800);transform-origin:right top;">45</span>
<span style="font-size:28px;color:#161616;left:1106.94px;top:745.85px;transform:scaleX(1.0200);transform-origin:right top;">10.11.2020</span>
<span style="font-size:28px;color:#161616;left:1280.20px;top:745.85px;transform:scaleX(1.0200);transform-origin:right top;">$368 693</span>
<span style="font-size:28px;color:#161616;left:1468.44px;top:745.85px;transform:scaleX(1.0200);transform-origin:right top;">13.11.2019</span>
<span style="font-size:28px;color:#161616;left:1670.28px;top:745.85px;transform:scaleX(1.0200);transform-origin:right top;">$40 508</span>
<span style="font-size:28px;color:#161616;left:162.20px;top:782.85px;transform:scaleX(1.0532);transform-origin:left top;">Мілківей</span>
<span style="font-size:28px;color:#161616;left:394.20px;top:782.85px;transform:scaleX(1.0046);transform-origin:left top;">Пінгвін</span>
<span style="font-size:28px;color:#161616;left:783.34px;top:782.85px;transform:scaleX(1.0800);transform-origin:right top;">34</span>
<span style="font-size:28px;color:#161616;left:1106.94px;top:782.85px;transform:scaleX(1.0200);transform-origin:right top;">10.11.2020</span>
<span style="font-size:28px;color:#161616;left:1280.20px;top:782.85px;transform:scaleX(1.0200);transform-origin:right top;">$241 229</span>
<span style="font-size:28px;color:#161616;left:1470.52px;top:782.85px;transform:scaleX(1.0200);transform-origin:right top;">11.11.2019</span>
<span style="font-size:28px;color:#161616;left:1670.28px;top:782.85px;transform:scaleX(1.0200);transform-origin:right top;">$37 773</span>
<span style="font-size:28px;color:#161616;left:162.20px;top:819.85px;transform:scaleX(1.0532);transform-origin:left top;">Мілківей</span>
<span style="font-size:28px;color:#161616;left:394.20px;top:819.85px;transform:scaleX(1.0046);transform-origin:left top;">Пінгвін</span>
<span style="font-size:28px;color:#161616;left:783.34px;top:819.85px;transform:scaleX(1.0800);transform-origin:right top;">25</span>
<span style="font-size:28px;color:#161616;left:1106.94px;top:819.85px;transform:scaleX(1.0200);transform-origin:right top;">10.11.2020</span>
<span style="font-size:28px;color:#161616;left:1280.20px;top:819.85px;transform:scaleX(1.0200);transform-origin:right top;">$160 093</span>
<span style="font-size:28px;color:#161616;left:1468.44px;top:819.85px;transform:scaleX(1.0200);transform-origin:right top;">12.11.2019</span>
<span style="font-size:28px;color:#161616;left:1670.28px;top:819.85px;transform:scaleX(1.0200);transform-origin:right top;">$24 518</span>
<span style="font-size:28px;color:#161616;left:162.20px;top:856.85px;transform:scaleX(1.0532);transform-origin:left top;">Мілківей</span>
<span style="font-size:28px;color:#161616;left:394.20px;top:856.85px;transform:scaleX(1.1286);transform-origin:left top;">Крокус</span>
<span style="font-size:28px;color:#161616;left:783.34px;top:856.85px;transform:scaleX(1.0800);transform-origin:right top;">54</span>
<span style="font-size:28px;color:#161616;left:1106.94px;top:856.85px;transform:scaleX(1.0200);transform-origin:right top;">10.11.2020</span>
<span style="font-size:28px;color:#161616;left:1280.20px;top:856.85px;transform:scaleX(1.0200);transform-origin:right top;">$335 420</span>
<span style="font-size:28px;color:#161616;left:1468.44px;top:856.85px;transform:scaleX(1.0200);transform-origin:right top;">13.11.2019</span>
<span style="font-size:28px;color:#161616;left:1670.28px;top:856.85px;transform:scaleX(1.0200);transform-origin:right top;">$52 676</span>
<span style="font-size:28px;color:#161616;left:162.20px;top:893.85px;transform:scaleX(1.0532);transform-origin:left top;">Мілківей</span>
<span style="font-size:28px;color:#161616;left:394.20px;top:893.85px;transform:scaleX(1.1259);transform-origin:left top;">Оріон</span>
<span style="font-size:28px;color:#161616;left:783.34px;top:893.85px;transform:scaleX(1.0800);transform-origin:right top;">34</span>
<span style="font-size:28px;color:#161616;left:1106.94px;top:893.85px;transform:scaleX(1.0200);transform-origin:right top;">10.11.2020</span>
<span style="font-size:28px;color:#161616;left:1280.20px;top:893.85px;transform:scaleX(1.0200);transform-origin:right top;">$217 945</span>
<span style="font-size:28px;color:#161616;left:1468.44px;top:893.85px;transform:scaleX(1.0200);transform-origin:right top;">14.11.2019</span>
<span style="font-size:28px;color:#161616;left:1670.28px;top:893.85px;transform:scaleX(1.0200);transform-origin:right top;">$27 205</span>
<span style="font-size:28px;color:#161616;left:162.20px;top:930.85px;transform:scaleX(1.0532);transform-origin:left top;">Мілківей</span>
<span style="font-size:28px;color:#161616;left:394.20px;top:930.85px;transform:scaleX(1.1286);transform-origin:left top;">Крокус</span>
<span style="font-size:28px;color:#161616;left:783.34px;top:930.85px;transform:scaleX(1.0800);transform-origin:right top;">36</span>
<span style="font-size:28px;color:#161616;left:1106.94px;top:930.85px;transform:scaleX(1.0200);transform-origin:right top;">10.11.2020</span>
<span style="font-size:28px;color:#161616;left:1280.20px;top:930.85px;transform:scaleX(1.0200);transform-origin:right top;">$265 227</span>
<span style="font-size:28px;color:#161616;left:1468.44px;top:930.85px;transform:scaleX(1.0200);transform-origin:right top;">15.11.2019</span>
<span style="font-size:28px;color:#161616;left:1670.28px;top:930.85px;transform:scaleX(1.0200);transform-origin:right top;">$36 339</span>
<span style="font-size:19px;color:#217346;font-weight:700;left:130.00px;top:972.37px;transform:scaleX(1.0191);transform-origin:left top;">Sheet1</span>
<span style="font-size:15.5px;color:#444444;left:10.00px;top:1011.33px;transform:scaleX(0.9372);transform-origin:left top;">Ready</span>
<span style="font-size:16.5px;color:#444444;left:1337.00px;top:1010.48px;transform:scaleX(0.9297);transform-origin:left top;">Display Settings</span>
<span style="font-size:16.5px;color:#444444;left:1870.00px;top:1010.48px;transform:scaleX(0.9272);transform-origin:left top;">115%</span>


<div style="left:837px;top:308px;width:355px;height:665px;background:#f0f0f0;border:1px solid #8a8a8a;box-shadow:0 5px 20px 1px rgba(0,0,0,0.34),0 0 2px rgba(0,0,0,0.2);"></div>
<div style="left:838px;top:309px;width:353px;height:44px;background:#fff;"></div>
<svg style="left:1148px;top:322px;" width="17" height="17" viewBox="0 0 17 17"><path d="M0.800 0.800l15.400 15.400M16.200 0.800l-15.400 15.400" stroke="#222" stroke-width="1.300"/></svg>
<div style="left:847px;top:369px;width:335px;height:551px;background:#fdfdfd;border:1px solid #c4c4c4;"></div>
<div style="left:858px;top:380px;width:313.5px;height:31px;background:#d3ede0;border:1px dotted #222;"></div>
<div style="left:859.5px;top:382.5px;width:19px;height:18.5px;background:#fff;border:1.300px solid #8c8c8c;"></div>
<svg style="left:859.5px;top:382.5px;" width="19" height="19" viewBox="0 0 19 19"><path d="M3.500 9.500l4 4 8-9" fill="none" stroke="#555" stroke-width="1.900"/></svg>
<div style="left:859.5px;top:415.5px;width:19px;height:18.5px;background:#fff;border:1.300px solid #3c3c3c;"></div>
<div style="left:859.5px;top:448.5px;width:19px;height:18.5px;background:#fff;border:1.300px solid #3c3c3c;"></div>
<div style="left:859.5px;top:481.5px;width:19px;height:18.5px;background:#fff;border:1.300px solid #3c3c3c;"></div>
<div style="left:859.5px;top:514.5px;width:19px;height:18.5px;background:#fff;border:1.300px solid #3c3c3c;"></div>
<div style="left:859.5px;top:547.5px;width:19px;height:18.5px;background:#fff;border:1.300px solid #3c3c3c;"></div>
<div style="left:859.5px;top:580.5px;width:19px;height:18.5px;background:#fff;border:1.300px solid #3c3c3c;"></div>
<div style="left:859.5px;top:613.5px;width:19px;height:18.5px;background:#fff;border:1.300px solid #3c3c3c;"></div>
<div style="left:943px;top:926.5px;width:111px;height:33.5px;background:#e1e1e1;border:2px solid #0078d7;"></div>
<div style="left:1070px;top:926.5px;width:111px;height:33.5px;background:#e1e1e1;border:1px solid #adadad;"></div>
<div style="left:1186px;top:966px;width:2.5px;height:2.5px;background:#b8b8b8;"></div>
<div style="left:1182px;top:966px;width:2.5px;height:2.5px;background:#b8b8b8;"></div>
<div style="left:1186px;top:962px;width:2.5px;height:2.5px;background:#b8b8b8;"></div>
<div style="left:1178px;top:966px;width:2.5px;height:2.5px;background:#b8b8b8;"></div>
<div style="left:1186px;top:958px;width:2.5px;height:2.5px;background:#b8b8b8;"></div>
<div style="left:1182px;top:962px;width:2.5px;height:2.5px;background:#b8b8b8;"></div>
<span style="font-size:17.5px;color:#161616;left:850.00px;top:324.24px;transform:scaleX(0.9541);transform-origin:left top;">Insert Slicers</span>
<span style="font-size:18px;color:#222;left:1082.00px;top:324.01px;transform:scaleX(0.8986);transform-origin:left top;">?</span>
<span style="font-size:15.7px;color:#444;left:887.50px;top:384.56px;transform:scaleX(0.9819);transform-origin:left top;">Найменування товару</span>
<span style="font-size:15.7px;color:#444;left:887.50px;top:417.56px;transform:scaleX(0.9926);transform-origin:left top;">Постачальник</span>
<span style="font-size:15.7px;color:#444;left:887.50px;top:450.56px;transform:scaleX(0.9618);transform-origin:left top;">Обсяг партії, т</span>
<span style="font-size:15.7px;color:#444;left:887.50px;top:483.56px;transform:scaleX(0.9753);transform-origin:left top;">Витрати</span>
<span style="font-size:15.7px;color:#444;left:887.50px;top:516.56px;transform:scaleX(0.9934);transform-origin:left top;">Дата надходження</span>
<span style="font-size:15.7px;color:#444;left:887.50px;top:549.56px;transform:scaleX(1.0044);transform-origin:left top;">Виручка</span>
<span style="font-size:15.7px;color:#444;left:887.50px;top:582.56px;transform:scaleX(0.9850);transform-origin:left top;">Дата реалізації</span>
<span style="font-size:15.7px;color:#444;left:887.50px;top:615.56px;transform:scaleX(1.0318);transform-origin:left top;">Прибуток</span>
<span style="font-size:16px;color:#161616;left:988.00px;top:935.91px;transform:scaleX(0.9297);transform-origin:left top;">OK</span>
<span style="font-size:16px;color:#161616;left:1102.00px;top:935.91px;transform:scaleX(0.9335);transform-origin:left top;">Cancel</span>


</body></html>
